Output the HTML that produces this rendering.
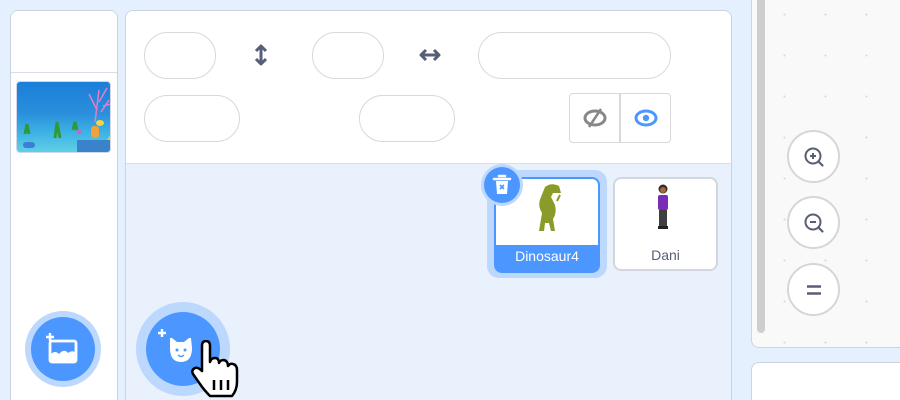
<!DOCTYPE html>
<html style="overflow:hidden;height:400px"><head><meta charset="utf-8"><style>
*{box-sizing:border-box;margin:0;padding:0}
body{width:900px;height:400px;overflow:hidden;background:#e5f0ff;position:relative;font-family:"Liberation Sans",sans-serif}
.abs{position:absolute}
.inp{position:absolute;border:1px solid #d9d9d9;border-radius:24px;background:#fff;height:47px}
</style></head><body>
<div class="abs" style="left:10px;top:10px;width:108px;height:390px;background:#fff;border:1px solid #ccd3e0;border-bottom:none;border-radius:8px 8px 0 0"></div>
<div class="abs" style="left:11px;top:72px;width:106px;height:1px;background:#d9dde6"></div>
<div class="abs" style="left:16px;top:81px;width:95px;height:72px;border:1px solid #cfd8e6;border-radius:4px;overflow:hidden;background:linear-gradient(#1a7fd8 0%,#2a8fdc 45%,#3bb0e4 70%,#5fd0e6 100%)">
<svg width="95" height="72" viewBox="0 0 95 72">
<path d="M78 40 L82 8 M82 20 L90 6 M80 28 L72 12 M84 30 L92 18 M86 24 L94 22" stroke="#e77bc8" stroke-width="1.5" fill="none"/>
<ellipse cx="83" cy="41" rx="4" ry="3" fill="#f5d544"/>
<path d="M38 56 L40 40 L43 56 M8 52 L10 42 L12 52 M56 48 L58 40 L60 48" stroke="#2e9a3a" stroke-width="3" fill="none"/>
<rect x="74" y="44" width="8" height="12" rx="3" fill="#f2a03a"/>
<path d="M94 52 l5 10 l-12 0z" fill="#bcd54a"/>
<rect x="60" y="58" width="35" height="14" fill="#3a83cc"/>
<rect x="6" y="60" width="12" height="6" rx="3" fill="#3e7ed6"/>
<circle cx="62" cy="50" r="2.5" fill="#c068d0"/>
</svg></div>
<div class="abs" style="left:25px;top:311px;width:76px;height:76px;border-radius:50%;background:#bcd8fd"></div>
<div class="abs" style="left:31px;top:317px;width:64px;height:64px;border-radius:50%;background:#4c97ff"></div>
<svg class="abs" style="left:46px;top:332px" width="34" height="34" viewBox="0 0 34 34">
<path d="M4 1v8M0 5h8" stroke="#fff" stroke-width="2.4"/>
<rect x="4" y="9" width="26" height="21" rx="2" fill="none" stroke="#fff" stroke-width="2.8"/>
<path d="M5 29 L5 22 Q9 18 13 22 Q18 16 22 21 Q26 18 29 20 L29 29z" fill="#fff"/>
</svg>
<div class="abs" style="left:125px;top:10px;width:607px;height:390px;background:#e9f1fc;border:1px solid #ccd3e0;border-bottom:none;border-radius:8px 8px 0 0;overflow:hidden">
<div style="height:153px;background:#fff;border-bottom:1px solid #d9dde6"></div>
</div>
<div class="inp" style="left:144px;top:32px;width:72px"></div>
<div class="inp" style="left:312px;top:32px;width:72px"></div>
<div class="inp" style="left:478px;top:32px;width:193px"></div>
<div class="inp" style="left:144px;top:95px;width:96px"></div>
<div class="inp" style="left:359px;top:95px;width:96px"></div>
<svg class="abs" style="left:254px;top:43px" width="14" height="24" viewBox="0 0 14 24"><path d="M7 3v18M2 8l5-5 5 5M2 16l5 5 5-5" stroke="#575e75" stroke-width="3" fill="none" stroke-linejoin="round"/></svg>
<svg class="abs" style="left:418px;top:48px" width="24" height="14" viewBox="0 0 24 14"><path d="M3 7h18M8 2L3 7l5 5M16 2l5 5-5 5" stroke="#575e75" stroke-width="3" fill="none" stroke-linejoin="round"/></svg>
<div class="abs" style="left:569px;top:93px;width:102px;height:50px;border:1px solid #d9d9d9;border-radius:4px;background:#fff"></div>
<div class="abs" style="left:619px;top:94px;width:2px;height:48px;background:#d9d9d9"></div>
<svg class="abs" style="left:582px;top:107px" width="26" height="22" viewBox="0 0 26 22"><ellipse cx="13" cy="11" rx="10" ry="7" fill="none" stroke="#878787" stroke-width="3"/><path d="M19 2L7 20" stroke="#878787" stroke-width="2.5"/></svg>
<svg class="abs" style="left:633px;top:108px" width="26" height="20" viewBox="0 0 26 20"><ellipse cx="13" cy="10" rx="10" ry="7" fill="none" stroke="#4c97ff" stroke-width="3"/><circle cx="13" cy="10" r="3.2" fill="#4c97ff"/></svg>
<div class="abs" style="left:487px;top:170px;width:120px;height:108px;border-radius:12px;background:#bcd8fd"></div>
<div class="abs" style="left:494px;top:177px;width:106px;height:96px;border-radius:8px;background:#4c97ff;overflow:hidden">
<div style="margin:2px;height:66px;background:#fff;border-radius:6px 6px 0 0"></div>
<div style="color:#fff;font-size:14px;text-align:center;margin-top:3px">Dinosaur4</div>
</div>
<svg class="abs" style="left:527px;top:183px" width="40" height="50" viewBox="0 0 40 50"><path d="M12 48 L15 30 Q10 22 14 14 L18 4 Q24 -1 32 3 L34 10 L26 10 L24 14 L28 22 Q30 30 26 36 L28 48 L24 48 L22 40 L18 40 L17 48 L10 48z" fill="#8b9b2a"/><path d="M30 18 L33 12" stroke="#8b9b2a" stroke-width="2"/></svg>
<div class="abs" style="left:481px;top:164px;width:42px;height:42px;border-radius:50%;background:#bcd8fd"></div>
<div class="abs" style="left:484px;top:167px;width:36px;height:36px;border-radius:50%;background:#4c97ff"></div>
<svg class="abs" style="left:492px;top:174px" width="20" height="22" viewBox="0 0 20 22"><path d="M7 2h6M2 5h16" stroke="#fff" stroke-width="2.5" stroke-linecap="round"/><path d="M4 7h12l-1 13H5z" fill="#fff"/><path d="M8 11l4 4M12 11l-4 4" stroke="#4c97ff" stroke-width="1.6"/></svg>
<div class="abs" style="left:613px;top:177px;width:105px;height:94px;border:2px solid #d2d6de;border-radius:8px;background:#fff"></div>
<div class="abs" style="left:613px;top:247px;width:105px;color:#575e75;font-size:14px;text-align:center">Dani</div>
<svg class="abs" style="left:655px;top:183px" width="16" height="50" viewBox="0 0 16 50"><circle cx="8" cy="6" r="4.5" fill="#3b2a20"/><circle cx="8" cy="7" r="3" fill="#a06a44"/><rect x="3" y="12" width="10" height="15" rx="2" fill="#7a2cb8"/><rect x="4" y="27" width="8" height="16" fill="#3f3f3f"/><rect x="3" y="43" width="10" height="3" fill="#222"/></svg>
<div class="abs" style="left:136px;top:302px;width:94px;height:94px;border-radius:50%;background:#bcd8fd"></div>
<div class="abs" style="left:146px;top:312px;width:74px;height:74px;border-radius:50%;background:#4c97ff"></div>
<svg class="abs" style="left:158px;top:328px" width="40" height="38" viewBox="0 0 40 38"><path d="M4 1v8M0 5h8" stroke="#fff" stroke-width="2.4"/><path d="M12 10 L14 10 L19 14 H26 L31 10 L33 10 L34 20 Q34 34 23 34 Q12 34 12 20z" fill="#fff"/><circle cx="19" cy="22" r="1.5" fill="#4c97ff"/><circle cx="27" cy="22" r="1.5" fill="#4c97ff"/><path d="M20 27 Q23 30 26 27" stroke="#4c97ff" stroke-width="1.3" fill="none"/></svg>
<svg class="abs" style="left:190px;top:340px" width="55" height="60" viewBox="0 0 55 60"><path d="M12 6 Q12 1 16 1 Q20 1 20 6 V22 Q21 18 25 18 Q29 18 29 23 Q30 20 34 20 Q38 21 38 26 Q40 23 43 24 Q47 25 47 30 V42 Q47 50 42 56 H20 Q14 50 10 44 L3 34 Q1 30 5 28 Q8 27 12 31z" fill="#fff" stroke="#000" stroke-width="2.5" stroke-linejoin="round"/><path d="M24 40v10M31 40v10M38 40v10" stroke="#000" stroke-width="2.5"/></svg>
<div class="abs" style="left:751px;top:-10px;width:149px;height:358px;background:#f9f9f9;border:1px solid #ccd3e0;border-right:none;border-radius:8px 0 0 8px;background-image:radial-gradient(#d9d9d9 0.8px,transparent 1.2px);background-size:41px 41px;background-position:12px 3px"></div>
<div class="abs" style="left:757px;top:0;width:8px;height:333px;background:#cecece;border-radius:0 0 4px 4px"></div>
<div class="abs" style="left:787px;top:130px;width:53px;height:53px;border-radius:50%;background:#fff;border:2px solid #d6d6d6"></div>
<div class="abs" style="left:787px;top:196px;width:53px;height:53px;border-radius:50%;background:#fff;border:2px solid #d6d6d6"></div>
<div class="abs" style="left:787px;top:263px;width:53px;height:53px;border-radius:50%;background:#fff;border:2px solid #d6d6d6"></div>
<svg class="abs" style="left:801px;top:144px" width="26" height="26" viewBox="0 0 26 26"><circle cx="12" cy="12" r="7.5" fill="none" stroke="#575e75" stroke-width="2"/><path d="M17.5 17.5l4 4" stroke="#575e75" stroke-width="2.2" stroke-linecap="round"/><path d="M12 9v6M9 12h6" stroke="#575e75" stroke-width="2"/></svg>
<svg class="abs" style="left:801px;top:210px" width="26" height="26" viewBox="0 0 26 26"><circle cx="12" cy="12" r="7.5" fill="none" stroke="#575e75" stroke-width="2"/><path d="M17.5 17.5l4 4" stroke="#575e75" stroke-width="2.2" stroke-linecap="round"/><path d="M9 12h6" stroke="#575e75" stroke-width="2"/></svg>
<svg class="abs" style="left:801px;top:277px" width="26" height="26" viewBox="0 0 26 26"><path d="M6 9.5h14M6 16.5h14" stroke="#575e75" stroke-width="2.6"/></svg>
<div class="abs" style="left:751px;top:362px;width:149px;height:38px;background:#fff;border:1px solid #ccd3e0;border-right:none;border-bottom:none;border-radius:8px 0 0 0"></div>
</body></html>
